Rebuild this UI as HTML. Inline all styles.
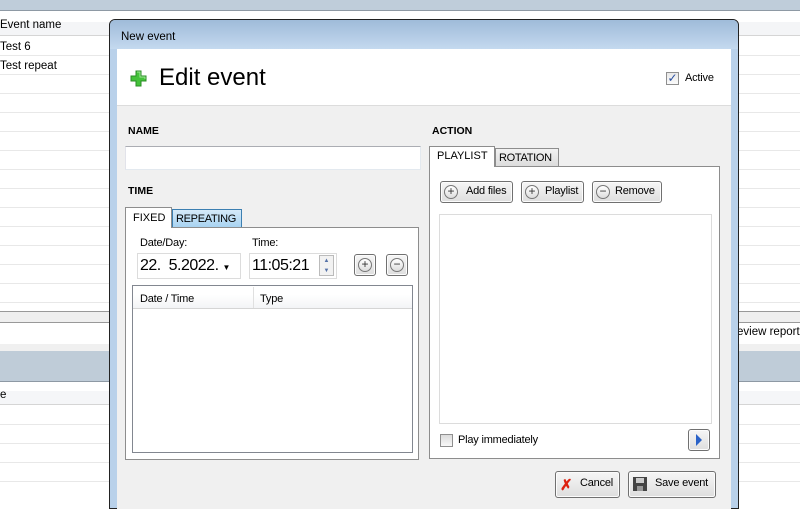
<!DOCTYPE html>
<html><head><style>
*{margin:0;padding:0;box-sizing:border-box}
body{width:800px;height:500px;overflow:hidden;position:relative;background:#fff;font-family:"Liberation Sans",sans-serif;font-size:11.5px;color:#000;white-space:nowrap}
.a{position:absolute}
.hl{position:absolute;left:0;width:800px;height:1px;background:#e8e8e8}
.btn{position:absolute;border:1px solid #707070;border-radius:3px;background:linear-gradient(#f6f6f6,#dedede);box-shadow:inset 0 0 0 1px #fcfcfc}
.circ{position:absolute;width:14px;height:14px;border:1px solid #777;border-radius:50%;background:linear-gradient(#fff,#ddd);font-size:12px;line-height:11px;text-align:center;color:#333}
.tab{position:absolute;border:1px solid #8d8d8d;border-bottom:none;font-size:11px}
.s{font-size:11px;letter-spacing:-0.2px}
</style></head><body>
<div class="a" style="left:0;top:0;width:800px;height:11px;background:#bfcdda;border-bottom:1px solid #8e99a4"></div>
<div class="a" style="left:0;top:22px;width:800px;height:13px;background:#f4f5f7"></div>
<div class="hl" style="top:35px;background:#d5d5d5"></div>
<div class="a" style="left:0;top:19px">Event name</div>
<div class="a" style="left:0;top:41px">Test 6</div>
<div class="a" style="left:0;top:60px">Test repeat</div>
<div class="hl" style="top:55px"></div><div class="hl" style="top:74px"></div><div class="hl" style="top:93px"></div><div class="hl" style="top:112px"></div><div class="hl" style="top:131px"></div><div class="hl" style="top:150px"></div><div class="hl" style="top:169px"></div><div class="hl" style="top:188px"></div><div class="hl" style="top:207px"></div><div class="hl" style="top:226px"></div><div class="hl" style="top:245px"></div><div class="hl" style="top:264px"></div><div class="hl" style="top:283px"></div><div class="hl" style="top:302px"></div>
<div class="a" style="left:0;top:311px;width:800px;height:12px;background:#efefef;border-top:1px solid #999;border-bottom:1px solid #999"></div>
<div class="a" style="left:0;top:344px;width:800px;height:7px;background:#f0f0f0"></div>
<div class="a" style="left:0;top:351px;width:800px;height:31px;background:#bfccd8;border-bottom:1px solid #8e99a4"></div>
<div class="a" style="left:0;top:391px;width:800px;height:14px;background:#f5f6f8;border-bottom:1px solid #d5d5d5"></div>
<div class="a" style="left:0;top:389px">e</div>
<div class="a" style="left:737px;top:326px">eview report</div>
<div class="hl" style="top:424px"></div><div class="hl" style="top:443px"></div><div class="hl" style="top:462px"></div><div class="hl" style="top:481px"></div>
<div class="a" style="left:109px;top:19px;width:630px;height:490px;border:1px solid #222;border-radius:6px 6px 0 0;background:#b9d1ea"></div>
<div class="a" style="left:110px;top:20px;width:628px;height:29px;border-radius:5px 5px 0 0;background:linear-gradient(#9fbbd9,#c4d9ef)"></div>
<div class="a" style="left:121px;top:31px">New event</div>
<div class="a" style="left:117px;top:49px;width:614px;height:460px;background:#f0f0f0"></div>
<div class="a" style="left:117px;top:49px;width:614px;height:57px;background:#fff;border-bottom:1px solid #dcdcdc"></div>
<svg class="a" style="left:130px;top:70px" width="17" height="17" viewBox="0 0 17 17"><path d="M6 1h5v5h5v5h-5v5H6v-5H1V6h5z" fill="#44c23a" stroke="#2a8e25"/><path d="M7 2h3v5h5v2" stroke="#9ee896" fill="none"/></svg>
<div class="a" style="left:159px;top:64px;font-size:24px">Edit event</div>
<div class="a" style="left:666px;top:72px;width:13px;height:13px;border:1px solid #8f8f8f;background:linear-gradient(#e8e8e8,#fafafa);color:#2a4fa0;font-size:12px;line-height:11px;text-align:center">✓</div>
<div class="a s" style="left:685px;top:72px">Active</div>
<div class="a" style="left:128px;top:125px;font-weight:bold;font-size:10.5px">NAME</div>
<div class="a" style="left:125px;top:146px;width:296px;height:24px;background:#fff;border:1px solid #abadb3;border-color:#abadb3 #e3e9ef #e3e9ef #e2e3ea"></div>
<div class="a" style="left:128px;top:185px;font-weight:bold;font-size:10.5px">TIME</div>
<div class="a" style="left:125px;top:227px;width:294px;height:233px;background:#fff;border:1px solid #8d8d8d"></div>
<div class="tab" style="left:125px;top:207px;width:47px;height:21px;background:#fff;padding:4px 0 0 7px">FIXED</div>
<div class="tab" style="left:172px;top:209px;width:70px;height:18px;background:linear-gradient(#d5eaf9,#a8d3f1);border-color:#3c7fb1;padding:3px 0 0 3px;letter-spacing:-0.3px">REPEATING</div>
<div class="a s" style="left:140px;top:237px">Date/Day:</div>
<div class="a s" style="left:252px;top:237px">Time:</div>
<div class="a" style="left:137px;top:253px;width:104px;height:26px;background:#fff;border:1px solid #dcdcdc;font-size:16px;padding:3px 0 0 2px;letter-spacing:-0.5px">22.&nbsp; 5.2022. <span style="font-size:8px">▼</span></div>
<div class="a" style="left:249px;top:253px;width:88px;height:26px;background:#fff;border:1px solid #dcdcdc;font-size:16px;padding:3px 0 0 2px;letter-spacing:-0.5px">11:05:21</div>
<div class="a" style="left:319px;top:255px;width:15px;height:21px;border:1px solid #bbb;background:#f2f2f2;font-size:6px;color:#5572a8;text-align:center;line-height:10px">▲<br>▼</div>
<div class="btn" style="left:354px;top:254px;width:22px;height:22px"></div><div class="circ" style="left:358px;top:258px">+</div>
<div class="btn" style="left:386px;top:254px;width:22px;height:22px"></div><div class="circ" style="left:390px;top:258px">−</div>
<div class="a" style="left:132px;top:285px;width:281px;height:168px;background:#fff;border:1px solid #828790"></div>
<div class="a" style="left:133px;top:286px;width:279px;height:23px;background:linear-gradient(#fff 40%,#f3f4f6);border-bottom:1px solid #d5d5d5"></div>
<div class="a" style="left:253px;top:287px;width:1px;height:21px;background:#e0e0e0"></div>
<div class="a s" style="left:140px;top:293px">Date / Time</div>
<div class="a s" style="left:260px;top:293px">Type</div>
<div class="a" style="left:432px;top:125px;font-weight:bold;font-size:10.5px">ACTION</div>
<div class="a" style="left:429px;top:166px;width:291px;height:293px;background:#fff;border:1px solid #8d8d8d"></div>
<div class="tab" style="left:429px;top:146px;width:66px;height:21px;background:#fff;padding:3px 0 0 7px">PLAYLIST</div>
<div class="tab" style="left:495px;top:148px;width:64px;height:18px;background:linear-gradient(#f2f2f2,#dcdcdc);padding:3px 0 0 3px;letter-spacing:-0.3px">ROTATION</div>
<div class="btn" style="left:440px;top:181px;width:73px;height:22px"></div><div class="circ" style="left:444px;top:185px">+</div><div class="a s" style="left:466px;top:185px">Add files</div>
<div class="btn" style="left:521px;top:181px;width:63px;height:22px"></div><div class="circ" style="left:525px;top:185px">+</div><div class="a s" style="left:545px;top:185px">Playlist</div>
<div class="btn" style="left:592px;top:181px;width:70px;height:22px"></div><div class="circ" style="left:596px;top:185px">−</div><div class="a s" style="left:615px;top:185px">Remove</div>
<div class="a" style="left:439px;top:214px;width:273px;height:210px;background:#fff;border:1px solid #dcdcdc"></div>
<div class="a" style="left:440px;top:434px;width:13px;height:13px;border:1px solid #8f8f8f;background:linear-gradient(#dcdcdc,#f8f8f8)"></div>
<div class="a s" style="left:458px;top:434px">Play immediately</div>
<div class="btn" style="left:688px;top:429px;width:22px;height:22px"></div>
<svg class="a" style="left:695px;top:433px" width="8" height="14"><path d="M1 1l6 6-6 6z" fill="#2a62c8"/></svg>
<div class="btn" style="left:555px;top:471px;width:65px;height:27px"></div>
<div class="a" style="left:560px;top:476px;color:#d21;font-weight:bold;font-size:15px">✗</div>
<div class="a s" style="left:580px;top:477px">Cancel</div>
<div class="btn" style="left:628px;top:471px;width:88px;height:27px"></div>
<svg class="a" style="left:632px;top:476px" width="16" height="16"><rect x="1" y="1" width="14" height="14" fill="#444"/><rect x="4" y="2" width="8" height="5" fill="#ccc"/><rect x="5" y="10" width="6" height="5" fill="#999"/></svg>
<div class="a s" style="left:655px;top:477px">Save event</div>
</body></html>
